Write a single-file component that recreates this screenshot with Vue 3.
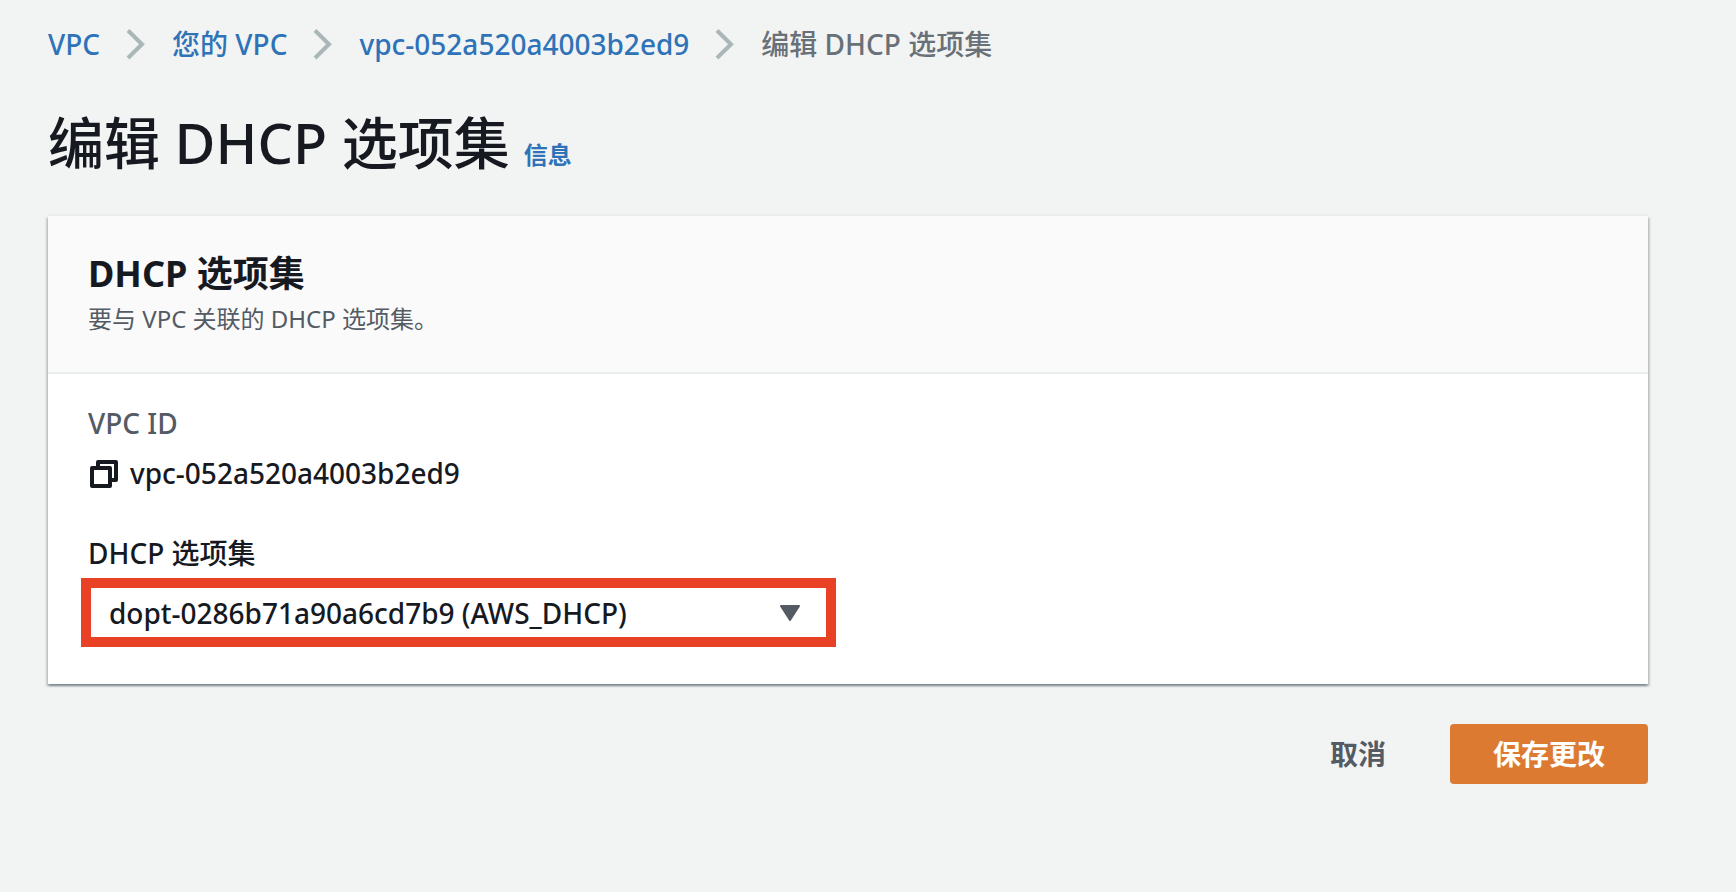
<script setup>
import { ref } from 'vue'

const vpcId = 'vpc-052a520a4003b2ed9'
const crumbs = ['VPC', '您的 VPC', vpcId]
const optionSets = ['dopt-0286b71a90a6cd7b9 (AWS_DHCP)']
const selected = ref(optionSets[0])
</script>

<template>
  <main class="page">
    <nav class="breadcrumbs" aria-label="breadcrumb">
      <template v-for="crumb in crumbs" :key="crumb">
        <a href="#">{{ crumb }}</a>
        <svg class="chevron" viewBox="0 0 20 32" aria-hidden="true">
          <path d="M2 2.5 16 16.2 2 30" />
        </svg>
      </template>
      <span class="current">编辑 DHCP 选项集</span>
    </nav>

    <header class="title">
      <h1>编辑 DHCP 选项集</h1>
      <a href="#" class="info">信息</a>
    </header>

    <form @submit.prevent>
      <section class="card">
        <div class="card-head">
          <h2>DHCP 选项集</h2>
          <p>要与 VPC 关联的 DHCP 选项集。</p>
        </div>
        <div class="card-body">
          <div class="name">VPC ID</div>
          <div class="value">
            <button type="button" class="copy" aria-label="复制">
              <svg viewBox="0 0 28 28" aria-hidden="true">
                <path d="M8 7V2H26V20H21" />
                <path d="M2 8H20V26H2Z" />
              </svg>
            </button>
            <span>{{ vpcId }}</span>
          </div>
          <label for="option-set">DHCP 选项集</label>
          <div class="select">
            <select id="option-set" v-model="selected">
              <option v-for="set in optionSets" :key="set">{{ set }}</option>
            </select>
            <svg viewBox="0 0 20 16" aria-hidden="true">
              <path d="M1 1H19L10 15Z" />
            </svg>
          </div>
        </div>
      </section>

      <div class="actions">
        <button type="button" class="cancel">取消</button>
        <button type="submit" class="save">保存更改</button>
      </div>
    </form>
  </main>
</template>

<style>
body {
  margin: 0;
  background: #f2f3f3;
}
</style>

<style scoped>
.page {
  padding: 24px 88px 48px 48px;
  color: #16191f;
  font-family: "Noto Sans", "Noto Sans CJK SC", sans-serif;
  font-size: 28px;
  font-weight: 500;
  line-height: 40px;
}
h1, h2, p {
  margin: 0;
}
a {
  color: #2e73b8;
  text-decoration: none;
}
button, select {
  font: inherit;
  border: 0;
  cursor: pointer;
}
.breadcrumbs {
  display: flex;
  align-items: center;
}
.chevron {
  width: 20px;
  height: 32px;
  margin: 0 26px;
  fill: none;
  stroke: #aab7b8;
  stroke-width: 4;
}
.current {
  color: #687078;
}
.title {
  display: flex;
  align-items: baseline;
  gap: 14px;
  margin: 42px 0 38px;
}
h1 {
  font-size: 56px;
  line-height: 72px;
  font-weight: 500;
}
.info {
  font-size: 24px;
  line-height: 36px;
  font-weight: 700;
}
.card {
  background: #fff;
  box-shadow: 0 2px 2px rgba(0, 28, 36, 0.3), 2px 2px 2px rgba(0, 28, 36, 0.15), -2px 2px 2px rgba(0, 28, 36, 0.15), 0 -2px 0 #eaeded;
}
.card-head {
  padding: 36px 40px 35px;
  background: #fafafa;
  border-bottom: 2px solid #eaeded;
}
h2 {
  font-size: 36px;
  line-height: 44px;
  font-weight: 700;
}
.card-head p {
  margin-top: 5px;
  color: #545b64;
  font-size: 24px;
  font-weight: 400;
  line-height: 36px;
}
.card-body {
  padding: 29px 40px 37px;
}
.name {
  color: #545b64;
}
.value {
  display: flex;
  align-items: center;
  gap: 12px;
  margin: 10px 0 40px;
}
.copy {
  display: flex;
  padding: 2px 0 0 2px;
  background: none;
}
.copy svg {
  width: 28px;
  height: 28px;
  fill: none;
  stroke: #16191f;
  stroke-width: 4;
  stroke-linejoin: round;
}
label {
  display: block;
}
.select {
  display: grid;
  align-items: center;
  width: calc(50% - 5px);
  height: 69px;
  margin: 5px 0 0 -7px;
  box-sizing: border-box;
  border: 10px solid #e94126;
}
.select select, .select svg {
  grid-area: 1 / 1;
}
.select select {
  width: 100%;
  height: 100%;
  padding: 0 60px 0 18px;
  appearance: none;
  color: inherit;
  background: #fff;
}
.select svg {
  justify-self: end;
  width: 20px;
  height: 16px;
  margin-right: 26px;
  fill: #545b64;
  stroke: #545b64;
  stroke-width: 2;
  stroke-linejoin: round;
  pointer-events: none;
}
.actions {
  display: flex;
  justify-content: flex-end;
  gap: 24px;
  margin-top: 40px;
}
.actions button {
  height: 60px;
  padding: 0 40px;
  border-radius: 4px;
  font-weight: 700;
}
.actions .cancel {
  color: #545b64;
  background: none;
}
.actions .save {
  padding: 0 43px;
  color: #fff;
  background: #dd7a32;
}
</style>
